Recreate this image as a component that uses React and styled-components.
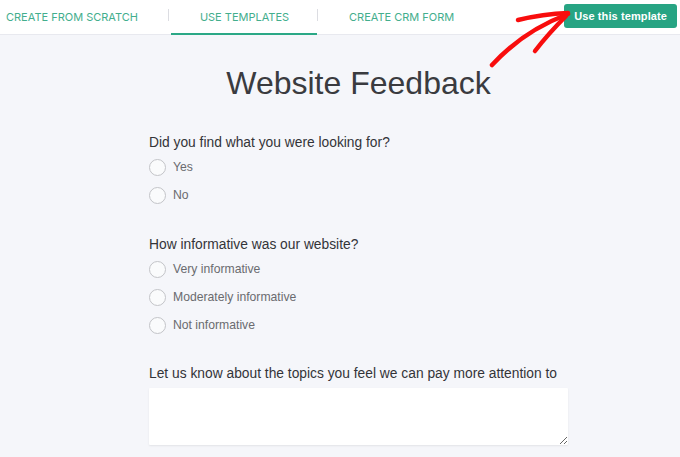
import React from "react";
import styled, { createGlobalStyle } from "styled-components";

const GlobalStyle = createGlobalStyle`
  html, body {
    margin: 0;
    padding: 0;
    background: #f5f6fa;
    overflow: hidden;
  }
  body {
    font-family: "Liberation Sans", Arial, sans-serif;
  }
`;

const Page = styled.div`
  position: relative;
  width: 680px;
  height: 457px;
  overflow: hidden;
  background: #f5f6fa;
`;

const Header = styled.header`
  display: flex;
  align-items: stretch;
  justify-content: space-between;
  height: 34px;
  background: #fff;
  border-bottom: 1px solid #e8e9ef;
`;

const Tabs = styled.nav`
  display: flex;
  align-items: stretch;
`;

const Tab = styled.a`
  display: flex;
  align-items: center;
  justify-content: center;
  box-sizing: border-box;
  height: 35px;
  margin-bottom: -1px;
  padding: ${(p) => (p.$first ? "1px 30px 0 6px" : "1px 30px 0 31px")};
  width: ${(p) => (p.$active ? "146px" : "auto")};
  margin-left: ${(p) => (p.$active ? "2px" : "0")};
  border-bottom: 2px solid ${(p) => (p.$active ? "#2ba886" : "transparent")};
  font-family: Inter, "Open Sans", sans-serif;
  font-size: 11px;
  letter-spacing: 0;
  text-transform: uppercase;
  color: #43ae8d;
  text-decoration: none;
  white-space: nowrap;
`;

const Divider = styled.span`
  align-self: center;
  width: 1px;
  height: 12px;
  margin-top: -4px;
  background: #dcdde2;
`;

const UseButton = styled.button`
  align-self: flex-start;
  margin: 4px 3px 0 0;
  height: 24px;
  padding: 0 10px 0 10px;
  border: none;
  border-radius: 3px;
  background: #27a483;
  color: #fff;
  font-family: "Liberation Sans", Arial, sans-serif;
  font-weight: bold;
  font-size: 11px;
  letter-spacing: 0.1px;
  cursor: pointer;
`;

const Main = styled.main`
  width: 419px;
  margin-left: 149px;
  display: flex;
  flex-direction: column;
`;

const Title = styled.h1`
  margin: 28px 0 31px;
  font-family: "Liberation Sans", Arial, sans-serif;
  font-weight: normal;
  font-size: 32px;
  line-height: 40px;
  text-align: center;
  color: #3a3b3f;
`;

const Field = styled.fieldset`
  margin: 0 0 ${(p) => p.$gap || 27}px;
  padding: 0;
  border: none;
`;

const Question = styled.legend`
  padding: 0;
  margin-bottom: 1px;
  font-size: 13.8px;
  line-height: 18px;
  color: #333438;
`;

const Option = styled.label`
  display: flex;
  align-items: center;
  gap: 7px;
  height: 28px;
  font-size: 12.2px;
  color: #6a6b6f;
`;

const Radio = styled.span`
  box-sizing: border-box;
  width: 17px;
  height: 17px;
  border-radius: 50%;
  border: 1px solid #c3c4c8;
  background: #fafbfc;
`;

const AreaLabel = styled.label`
  display: block;
  margin-bottom: 5px;
  font-size: 13.8px;
  line-height: 18px;
  color: #333438;
  white-space: nowrap;
`;

const TextArea = styled.textarea`
  display: block;
  box-sizing: border-box;
  width: 419px;
  height: 57px;
  border: none;
  border-radius: 1px;
  background: #fff;
  box-shadow: 0 1px 2px rgba(0, 0, 0, 0.08);
  resize: both;
`;

const Arrow = styled.svg`
  position: absolute;
  left: 0;
  top: 0;
  pointer-events: none;
`;

function RadioGroup({ question, options, gap }) {
  return (
    <Field $gap={gap}>
      <Question>{question}</Question>
      {options.map((o) => (
        <Option key={o}>
          <Radio />
          {o}
        </Option>
      ))}
    </Field>
  );
}

export default function App() {
  return (
    <>
      <GlobalStyle />
      <Page>
        <Header>
          <Tabs>
            <Tab href="#" $first>Create from scratch</Tab>
            <Divider />
            <Tab href="#" $active>Use templates</Tab>
            <Divider />
            <Tab href="#">Create CRM form</Tab>
          </Tabs>
          <UseButton>Use this template</UseButton>
        </Header>

        <Main>
          <Title>Website Feedback</Title>
          <RadioGroup
            question="Did you find what you were looking for?"
            options={["Yes", "No"]}
            gap={27}
          />
          <RadioGroup
            question="How informative was our website?"
            options={["Very informative", "Moderately informative", "Not informative"]}
            gap={26}
          />
          <AreaLabel>Let us know about the topics you feel we can pay more attention to</AreaLabel>
          <TextArea />
        </Main>

        <Arrow width="680" height="457" viewBox="0 0 680 457">
          <g fill="none" stroke="#f80d0d" strokeWidth="4.5" strokeLinecap="round" strokeLinejoin="round">
            <path d="M492 65 Q523 31 568 14" />
            <path d="M518 20 Q543 14 568 13" />
            <path d="M535 51 Q548 34 566 16" />
          </g>
        </Arrow>
      </Page>
    </>
  );
}
